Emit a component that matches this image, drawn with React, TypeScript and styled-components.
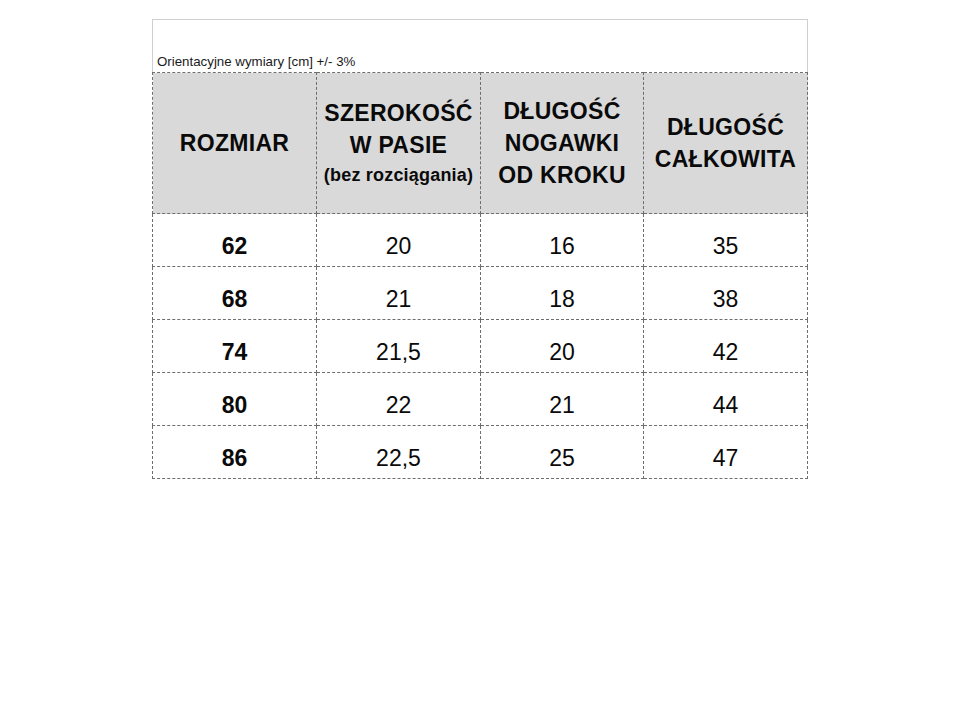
import { FC } from 'react';
import styled, { createGlobalStyle } from 'styled-components';

const GlobalStyle = createGlobalStyle`
    html, body {
        margin: 0;
        padding: 0;
        background: #ffffff;
    }
    body {
        font-family: 'Liberation Sans', Arial, sans-serif;
        color: #000000;
    }
`;

type SizeRow = {
    size: string;
    waist: string;
    inseam: string;
    total: string;
};

const rows: SizeRow[] = [
    { size: '62', waist: '20', inseam: '16', total: '35' },
    { size: '68', waist: '21', inseam: '18', total: '38' },
    { size: '74', waist: '21,5', inseam: '20', total: '42' },
    { size: '80', waist: '22', inseam: '21', total: '44' },
    { size: '86', waist: '22,5', inseam: '25', total: '47' },
];

const Page = styled.div`
    width: 960px;
    height: 720px;
    padding: 19px 0 0 152px;
    box-sizing: border-box;
`;

const Sheet = styled.div`
    width: 656px;
    box-sizing: border-box;
`;

const Caption = styled.div`
    height: 53px;
    box-sizing: border-box;
    border: 1px solid #cfcfcf;
    border-bottom: none;
    display: flex;
    align-items: flex-end;
    padding: 0 0 3px 4px;
    font-size: 13.3px;
    line-height: 15px;
    color: #1a1a1a;
`;

const Table = styled.table`
    width: 656px;
    table-layout: fixed;
    border-collapse: collapse;
    border: 1px dashed #6e6e6e;
`;

const HeadCell = styled.th`
    height: 140px;
    padding: 0;
    background: #d9d9d9;
    border: 1px dashed #6e6e6e;
    vertical-align: middle;
    text-align: center;
    font-weight: bold;
    font-size: 23px;
    line-height: 32px;
    letter-spacing: 0.3px;
    color: #0a0a0a;
`;

const HeadNote = styled.span`
    display: block;
    font-size: 18px;
    line-height: 28px;
    letter-spacing: 0.2px;
`;

const Cell = styled.td<{ $bold?: boolean }>`
    height: 53px;
    padding: 19px 0 0;
    box-sizing: border-box;
    border: 1px dashed #6e6e6e;
    vertical-align: top;
    text-align: center;
    font-size: 23px;
    line-height: 26px;
    color: #0a0a0a;
    font-weight: ${({ $bold }) => ($bold ? 'bold' : 'normal')};
`;

const App: FC = () => {
    return (
        <>
            <GlobalStyle />
            <Page>
                <Sheet>
                    <Caption>Orientacyjne wymiary [cm] +/- 3%</Caption>
                    <Table>
                        <colgroup>
                            <col style={{ width: 164 }} />
                            <col style={{ width: 164 }} />
                            <col style={{ width: 163 }} />
                            <col style={{ width: 164 }} />
                        </colgroup>
                        <thead>
                            <tr>
                                <HeadCell>ROZMIAR</HeadCell>
                                <HeadCell>
                                    SZEROKOŚĆ
                                    <br />
                                    W PASIE
                                    <HeadNote>(bez rozciągania)</HeadNote>
                                </HeadCell>
                                <HeadCell>
                                    DŁUGOŚĆ
                                    <br />
                                    NOGAWKI
                                    <br />
                                    OD KROKU
                                </HeadCell>
                                <HeadCell>
                                    DŁUGOŚĆ
                                    <br />
                                    CAŁKOWITA
                                </HeadCell>
                            </tr>
                        </thead>
                        <tbody>
                            {rows.map((row) => (
                                <tr key={row.size}>
                                    <Cell $bold>{row.size}</Cell>
                                    <Cell>{row.waist}</Cell>
                                    <Cell>{row.inseam}</Cell>
                                    <Cell>{row.total}</Cell>
                                </tr>
                            ))}
                        </tbody>
                    </Table>
                </Sheet>
            </Page>
        </>
    );
};

export default App;
